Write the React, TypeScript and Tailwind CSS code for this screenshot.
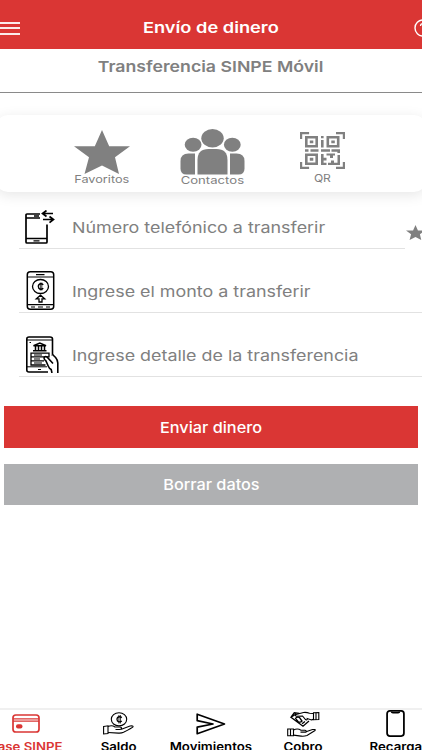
import React from 'react';
import clsx from 'clsx';

interface IconProps {
  className?: string;
}

const StarIcon: React.FC<IconProps> = ({ className }) => (
  <svg viewBox="0 0 56 44" preserveAspectRatio="none" fill="currentColor" className={className}>
    <path d="M28 0l7.200 16.2H56L41 27.2 45 44 28 35.500 10.500 44l4.500-16.800L0 16.200h20.800z" />
  </svg>
);

const PeopleIcon: React.FC<IconProps> = ({ className }) => (
  <svg viewBox="0 0 64 46" fill="currentColor" className={className}>
    <ellipse cx="32" cy="9.200" rx="11.200" ry="9.200" />
    <ellipse cx="12.600" cy="15.800" rx="8.400" ry="7" />
    <ellipse cx="51.800" cy="15.800" rx="8.400" ry="7" />
    <path d="M17 45.500V31q0-11 11-11h8q11 0 11 11v14.500z" />
    <path d="M14.500 45.500H6q-6 0-6-6V32q0-7.500 8-7.500h6.500z" />
    <path d="M49.500 45.500H58q6 0 6-6V32q0-7.500-8-7.500h-6.500z" />
  </svg>
);

const QrIcon: React.FC<IconProps> = ({ className }) => (
  <svg viewBox="0 0 45 37" fill="none" stroke="currentColor" className={className}>
    <path strokeWidth="2.200" d="M1.100 7V1.100h8M36 1.100h7.900V7M1.100 30v5.900h8M36 35.900h7.900V30" />
    <path strokeWidth="2.600" d="M6.300 5.300h10.400v9H6.300zM27.800 5.300h10.400v9H27.800zM6.300 22.700h10.400v9H6.300z" />
    <path
      fill="currentColor"
      stroke="none"
      d="M9.800 8.400h3.500v2.900H9.800zM31.300 8.400h3.500v2.900h-3.500zM9.800 25.800h3.500v2.900H9.800zM21 4h2.600v2.200H21zM21 8h2.600v7.500H21zM5 17.300h3.500v2.400H5zM10.500 17.300h8v2.400h-8zM21 17.300h9v2.400h-9zM31.500 17.300H40V21h-2.600v-1.300h-5.900zM21 22h2.600v11H21zM23 25.800h3.500v2.600H23zM23 30.800h3.500V33H23zM26.500 21.500H35v2h-2v2.500h-3v-2.500h-3.500zM37.500 23H40v10H28v-2.200h3v-2.300h3v2.300h3.500z"
    />
  </svg>
);

const PhoneTransferIcon: React.FC<IconProps> = ({ className }) => (
  <svg viewBox="0 0 30 35" fill="none" stroke="currentColor" strokeWidth="1.700" className={className}>
    <path d="M15 4H2q-1 0-1 1v27q0 1 1 1h19q1 0 1-1V14.500" />
    <path strokeWidth="1.300" d="M1 8h14M1 28.500h21M8.500 30.800h6M9 6h5" />
    <path strokeWidth="1.700" d="M28 3.500H17.500M21.500 .500l-4 3 4 3M18 9.500h10.500M24.500 6.500l4 3-4 3.200" />
  </svg>
);

const PhoneAmountIcon: React.FC<IconProps> = ({ className }) => (
  <svg viewBox="0 0 28 39" fill="none" stroke="currentColor" strokeWidth="1.500" className={className}>
    <rect x=".8" y=".8" width="26.400" height="37.400" rx="3" />
    <path strokeWidth="1.200" d="M1 6h26M9.500 3.600h8.500M1 33.600h26M4.500 36h4M11.500 36h5M19.500 36h4" />
    <ellipse cx="14" cy="15.500" rx="8" ry="7" strokeWidth="1.300" />
    <path strokeWidth="1.400" d="M16.800 13.800q-2.500-2-4.500 0-1.300 1.700 0 3.400 2 2 4.500 0" />
    <path strokeWidth=".8" d="M13.800 11.500v8M15.300 11.500v8" />
    <path strokeWidth="1.300" d="M12.500 31v-3.200H9.800L14 24.200l4.200 3.600h-2.700V31z" />
  </svg>
);

const PhoneDetailIcon: React.FC<IconProps> = ({ className }) => (
  <svg viewBox="0 0 33 37" fill="none" stroke="currentColor" strokeWidth="1.300" className={className}>
    <path strokeWidth="1.600" d="M22 36H3q-2.200 0-2.200-2V3Q.8 1 3 1h21q2.500 0 2.500 2v17" />
    <path strokeWidth="1" d="M1 4h25M1 30.800h20M3.500 6.500h1.500M12 33.500h3" />
    <path strokeWidth="1.500" d="M7.500 9.800L13.800 7l6.200 2.800zM9.500 10v4M12.500 10v4M15.500 10v4M18.500 10v4M7 14.800h13.500" />
    <path d="M5 17.200h18v3.600H5zM5 20.800v4h13M5 25v4h14.500M5 24.900h12.500" />
    <path strokeWidth="1" d="M8 19h8M8 23h6M8 27h8" />
    <path
      fill="white"
      stroke="none"
      d="M31.800 37V27q0-2.800-2.200-5.500L26 18.500v7l-5-4.500q-2.500-1-3 1 0 1.500 2 3l2.200 5q1 2.500 3 3.500l.8 3.500"
    />
    <path
      strokeWidth="1.600"
      d="M31.800 37V27q0-2.800-2.200-5.500L26.500 18.500M27 27.500L21 21q-2.500-1-3 1 0 1.500 2 3l2.200 5q1 2.500 3 3.500l.8 3.500"
    />
  </svg>
);

const CardIcon: React.FC<IconProps> = ({ className }) => (
  <svg viewBox="0 0 28 19" fill="none" stroke="currentColor" className={className}>
    <rect x="1" y="1" width="26" height="17" rx="2.800" strokeWidth="1.700" />
    <path strokeWidth="1.300" d="M1 4.800h26M1 7.200h26" />
    <rect x="4" y="10.300" width="6.500" height="4.300" rx="2" fill="currentColor" stroke="none" />
  </svg>
);

const CoinHandIcon: React.FC<IconProps> = ({ className }) => (
  <svg viewBox="0 0 31 23" fill="none" stroke="currentColor" strokeWidth="1.100" className={className}>
    <ellipse cx="16" cy="7.300" rx="7.700" ry="6.600" />
    <path strokeWidth="1.400" d="M18.800 5.600q-2.300-1.800-4.300 0-1.300 1.700 0 3.400 2 1.800 4.300 0" />
    <path strokeWidth=".8" d="M15.900 3v8.500M17.400 3v8.500" />
    <path d="M.6 14.500L5 13.800v7.800l-4.400.4z" />
    <path d="M5 14.500q4-1.700 7 .5h5q2 .4 1.500 1.600-.5.900-2 .9h-4M18.500 17.200l8.500-3.200q3.500-.5 3 .8-1 1-9.500 5.500-2 1-5 .8l-10.500-.6" />
  </svg>
);

const SendIcon: React.FC<IconProps> = ({ className }) => (
  <svg viewBox="0 0 30 22" fill="none" stroke="currentColor" strokeWidth="1.700" strokeLinejoin="round" className={className}>
    <path d="M1.200 1.200L28.500 11 1.200 20.700v-6.500L17 11 1.200 7.700z" />
  </svg>
);

const CashHandsIcon: React.FC<IconProps> = ({ className }) => (
  <svg viewBox="0 0 33 26" fill="none" stroke="currentColor" strokeWidth="1.100" className={className}>
    <path d="M26.500 1.800L31.800 1.500v7l-5.300.2zM29 2v6.500" />
    <path d="M26.500 2.500l-4-.2q-3-1.200-6-.8L9 3.500q-1.500 1 .5 1.800l6-.3 3 3.500q2 1.200 1.700-1l4.300 1.400 2-.5" />
    <path strokeWidth="1.300" d="M9 3L4 6.200l12 9 6-5.200M4 6.200l3.300-4.400 5 .5M8.500 7.300q1.500-2 4-.8l2.500 3.500q-1.500 2-4 .5zM15 12.800l3-2.300" />
    <path d="M.7 18h5.800v6.800H.7zM3.500 18v6.800" />
    <path d="M6.500 19q4-2 7.500.2h4q2 .5 1 1.900h-5.500M19 20.700l6.500-2.200q3.500-.3 2.500 1L20 24.500q-3 1-6 .6l-7.500-1" />
  </svg>
);

const MobileIcon: React.FC<IconProps> = ({ className }) => (
  <svg viewBox="0 0 18 26" fill="none" stroke="currentColor" strokeWidth="1.700" className={className}>
    <rect x=".9" y=".9" width="16.200" height="24.200" rx="2.600" />
    <path strokeWidth="1.400" d="M5 1.600q.2 1 1.500 1h5q1.300 0 1.500-1" />
  </svg>
);

const fields = [
  {
    label: 'Número telefónico a transferir',
    icon: <PhoneTransferIcon className="h-[35px] w-[30px]" />,
    iconClass: 'pt-[3px] pl-[6px]',
    favorite: true,
  },
  {
    label: 'Ingrese el monto a transferir',
    icon: <PhoneAmountIcon className="h-[39px] w-[29px]" />,
    iconClass: 'pt-0 pl-[7px]',
  },
  {
    label: 'Ingrese detalle de la transferencia',
    icon: <PhoneDetailIcon className="h-[37px] w-[33px]" />,
    iconClass: 'pt-[1px] pl-[7px]',
  },
];

const tabs = [
  { label: 'Pase SINPE', icon: <CardIcon className="h-[19px] w-[28px]" />, active: true },
  { label: 'Saldo', icon: <CoinHandIcon className="h-[23px] w-[31px]" /> },
  { label: 'Movimientos', icon: <SendIcon className="h-[22px] w-[30px]" /> },
  { label: 'Cobro', icon: <CashHandsIcon className="h-[26px] w-[33px]" /> },
  { label: 'Recarga', icon: <MobileIcon className="h-[27px] w-[19px]" /> },
];

export default function App() {
  return (
    <div className="flex h-[750px] w-[422px] flex-col overflow-hidden bg-white font-['Inter',sans-serif] text-[#808080]">
      {/* Header */}
      <header className="flex h-[48.500px] shrink-0 items-center justify-between bg-[#da3634] pt-[8px] text-white">
        <div className="flex w-5 flex-col gap-[3.500px]">
          <span className="h-[2px] bg-white/90" />
          <span className="h-[2px] bg-white/90" />
          <span className="h-[2px] bg-white/90" />
        </div>
        <h1 className="scale-x-[1.215] text-[15px] font-semibold whitespace-nowrap">Envío de dinero</h1>
        <div className="w-5">
          <svg viewBox="0 0 18 18" fill="none" stroke="currentColor" strokeWidth="1.400" className="ml-[12px] h-[18px] w-[18px]">
            <circle cx="9" cy="9" r="8" />
            <path d="M6.500 7q0-2.500 2.500-2.500T11.500 7 9 10.500M9 12.500V14" />
          </svg>
        </div>
      </header>

      <div className="flex h-[44px] shrink-0 justify-center border-b border-[#8a8a8a] pt-[7px]">
        <h2 className="scale-x-[1.180] text-[15px] font-semibold">Transferencia SINPE Móvil</h2>
      </div>

      {/* Shortcuts */}
      <section className="-mx-1 mt-[22.500px] flex h-[77px] shrink-0 rounded-[12px] bg-white shadow-[0_3px_14px_rgba(0,0,0,0.1)]">
        <div className="ml-[51px] flex w-[110px] flex-col items-center pt-[15px]">
          <StarIcon className="h-[44px] w-[56px]" />
          <span className="-mt-px scale-x-[1.210] text-[10.500px] leading-[13px]">Favoritos</span>
        </div>
        <div className="flex w-[110px] flex-col items-center pt-[14px]">
          <PeopleIcon className="h-[46px] w-[65px]" />
          <span className="-mt-px scale-x-[1.250] text-[10.500px] leading-[13px]">Contactos</span>
        </div>
        <div className="flex w-[110px] flex-col items-center pt-[17px]">
          <QrIcon className="h-[37px] w-[45px]" />
          <span className="mt-[3px] scale-x-[1.150] text-[10.500px] leading-[13px]">QR</span>
        </div>
      </section>

      {/* Form */}
      <form className="flex flex-col pt-[15px] pl-[19px]">
        {fields.map((field) => (
          <div key={field.label} className="flex h-[64px]">
            <div
              className={clsx(
                'flex h-[42px] shrink-0 border-b border-[#e2e2e2]',
                field.favorite ? 'w-[386px]' : 'w-[403px]'
              )}
            >
              <div className={clsx('w-[53px] shrink-0 text-black', field.iconClass)}>{field.icon}</div>
              <span className="mt-[10px] h-5 origin-left scale-x-[1.192] text-[15px] leading-[22px] whitespace-nowrap">
                {field.label}
              </span>
            </div>
            {field.favorite && <StarIcon className="mt-[18px] ml-[1px] h-[15px] w-[19px] shrink-0" />}
          </div>
        ))}
      </form>

      {/* Actions */}
      <div className="mt-[7px] flex flex-col gap-[16px] px-[4px] text-[15px] font-medium text-white">
        <button className="h-[41.500px] bg-[#da3634] pt-[2px]">
          <span className="inline-block scale-x-[1.085]">Enviar dinero</span>
        </button>
        <button className="h-[41.500px] bg-[#afb0b2] pt-[2px]">
          <span className="inline-block scale-x-[1.085]">Borrar datos</span>
        </button>
      </div>

      {/* Bottom navigation */}
      <nav className="-mx-[20px] mt-auto flex h-[42px] shrink-0 overflow-hidden border-t-2 border-[#f0f0f0] text-black">
        {tabs.map((tab) => (
          <div
            key={tab.label}
            className={clsx('flex w-[92.400px] shrink-0 flex-col items-center', tab.active && 'text-[#da3634]')}
          >
            <div className="flex h-[27px] shrink-0 items-center">{tab.icon}</div>
            <span className="mt-[3px] scale-x-[1.150] text-[11.500px] leading-[15px] font-semibold whitespace-nowrap">
              {tab.label}
            </span>
          </div>
        ))}
      </nav>
    </div>
  );
}
